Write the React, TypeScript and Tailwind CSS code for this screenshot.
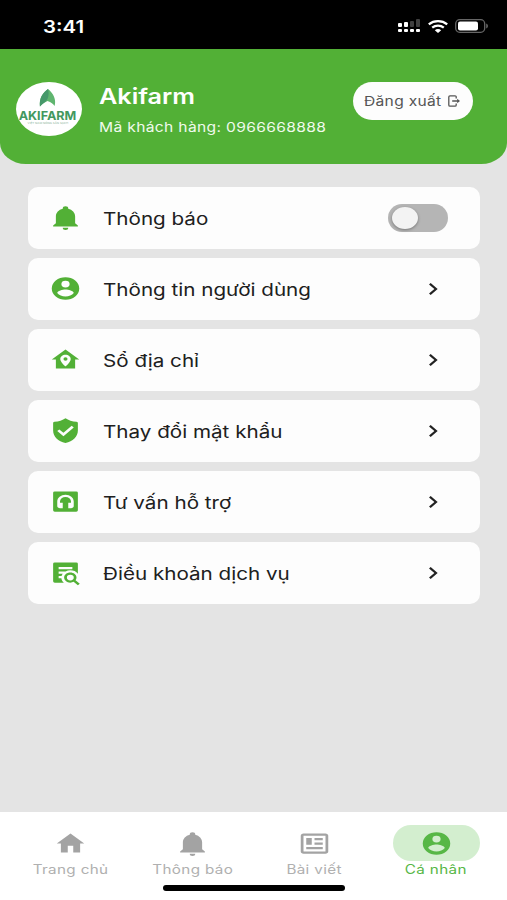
import { useState } from "react";
import type { ReactNode } from "react";
import clsx from "clsx";

const icons = {
  bell: "M21 19v1H3v-1l2-2v-6c0-3.1 2.03-5.83 5-6.71V4a2 2 0 0 1 4 0v.29c2.97.88 5 3.61 5 6.71v6l2 2m-7 2a2 2 0 0 1-4 0",
  account:
    "M12 19.2c-2.5 0-4.71-1.28-6-3.2.03-2 4-3.1 6-3.1s5.97 1.1 6 3.1c-1.29 1.92-3.5 3.2-6 3.2M12 5a3 3 0 1 1 0 6 3 3 0 0 1 0-6m0-3a10 10 0 1 0 0 20 10 10 0 0 0 0-20z",
  address:
    "M12 3 2 12h3v8h14v-8h3L12 3m0 4.7c2.1 0 3.8 1.7 3.8 3.8 0 3-3.8 6.5-3.8 6.5s-3.8-3.5-3.8-6.5c0-2.1 1.7-3.8 3.8-3.8m0 2.3a1.5 1.5 0 1 0 0 3 1.5 1.5 0 0 0 0-3z",
  shield:
    "M12 1c2 1.7 5 3 8 3.3.7.1 1 .5 1 1.2V12c0 5.500-3.600 9.600-9 11-5.400-1.400-9-5.500-9-11V5.500c0-.7.3-1.100 1-1.200C7 4 10 2.700 12 1zm-1.500 16 7.500-7.700L16.500 7.800l-6 6.200-3-3L6 12.500l4.500 4.500z",
  support:
    "M12 6c3.300 0 6 2.690 6 6v4c0 1.110-.89 2-2 2h-2v-5h2v-1a4 4 0 0 0-8 0v1h2v5H8c-1.110 0-2-.89-2-2v-4c0-3.310 2.690-6 6-6M4.200 3h15.600A1.200 1.200 0 0 1 21 4.200v15.600a1.200 1.200 0 0 1-1.200 1.200H4.200A1.200 1.200 0 0 1 3 19.800V4.200A1.200 1.200 0 0 1 4.200 3z",
  terms:
    "M15.500 12c2.500 0 4.500 2 4.500 4.500 0 .88-.25 1.710-.69 2.400l3.080 3.100L21 23.390l-3.120-3.070c-.69.43-1.510.68-2.380.68-2.500 0-4.500-2-4.500-4.500s2-4.500 4.500-4.500m0 2a2.500 2.500 0 1 0 0 5 2.500 2.500 0 0 0 0-5M7 15v2h2c.14 1.550.8 2.940 1.810 4H4.200A1.200 1.200 0 0 1 3 19.800V4.200A1.200 1.200 0 0 1 4.200 3h15.600A1.200 1.200 0 0 1 21 4.200v8.830A6.500 6.500 0 0 0 15.500 10c-1.270 0-2.450.36-3.460 1H7v2h3.030c-.42.600-.730 1.280-.890 2H7M17 9V7H7v2h10z",
  home: "M10 20v-6h4v6h5v-8h3L12 3 2 12h3v8h5z",
  news: "M20 5v14H4V5h16m0-2H4c-1.110 0-2 .89-2 2v14c0 1.110.89 2 2 2h16c1.110 0 2-.89 2-2V5c0-1.110-.89-2-2-2m-2 12H6v2h12v-2m-8-8H6v6h4V7m2 2h6V7h-6v2m6 2h-6v2h6v-2z",
  chevron: "M8.590 16.580 13.170 12 8.590 7.410 10 6l6 6-6 6-1.410-1.420z",
};

type IconName = keyof typeof icons;

function Icon({ name, className }: { name: IconName; className?: string }) {
  return (
    <svg viewBox="0 0 24 24" preserveAspectRatio="none" fill="currentColor" fillRule="evenodd" className={clsx("shrink-0", className)}>
      <path d={icons[name]} />
    </svg>
  );
}

// wide lettering used all over the app
function Wide({ children, className }: { children: ReactNode; className?: string }) {
  return <span className={clsx("block scale-x-[1.2] whitespace-nowrap", className)}>{children}</span>;
}

const menu: { icon: IconName; label: string }[] = [
  { icon: "bell", label: "Thông báo" },
  { icon: "account", label: "Thông tin người dùng" },
  { icon: "address", label: "Sổ địa chỉ" },
  { icon: "shield", label: "Thay đổi mật khẩu" },
  { icon: "support", label: "Tư vấn hỗ trợ" },
  { icon: "terms", label: "Điều khoản dịch vụ" },
];

const tabs: { icon: IconName; label: string }[] = [
  { icon: "home", label: "Trang chủ" },
  { icon: "bell", label: "Thông báo" },
  { icon: "news", label: "Bài viết" },
  { icon: "account", label: "Cá nhân" },
];

function StatusBar() {
  return (
    <div className="flex h-[49px] shrink-0 items-center justify-between bg-black pt-[3px] pr-[18px] pl-[43px] text-white">
      <Wide className="origin-left pt-[3px] text-[17px] font-semibold">3:41</Wide>
      <div className="flex items-center">
        <svg viewBox="0 0 22 14" className="mr-[8px] h-[14px] w-[22px]" fill="#fff">
          <rect y="4" width="4" height="4" rx="1" />
          <rect x="6" y="3" width="4" height="5" rx="1" />
          <rect x="12" y="2" width="4" height="6" rx="1" opacity=".25" />
          <rect x="18" y="0" width="4" height="8" rx="1" opacity=".25" />
          <rect y="10" width="4" height="3" rx="1" />
          <rect x="6" y="10" width="4" height="3" rx="1" />
          <rect x="12" y="10" width="4" height="3" rx="1" />
          <rect x="18" y="10" width="4" height="3" rx="1" />
        </svg>
        <svg viewBox="0 0 20 13" className="mr-[7px] h-[13px] w-[20px]" fill="none" stroke="#fff" strokeWidth="2.300">
          <path d="M.8 4.300c5.200-4.200 13.200-4.200 18.400 0" />
          <path d="M4.200 7.700c3.400-2.900 8.200-2.900 11.600 0" />
          <path d="M6.800 10.200c1.900-1.600 4.500-1.600 6.400 0L10 13z" fill="#fff" stroke="none" />
        </svg>
        <svg viewBox="0 0 34 14" className="h-[14px] w-[34px]">
          <rect x=".7" y=".7" width="29" height="12.600" rx="4" fill="none" stroke="#666" strokeWidth="1.300" />
          <rect x="3" y="2.500" width="20" height="9" rx="2" fill="#fff" />
          <path d="M31.300 4.500c2 .8 2 4.200 0 5z" fill="#777" />
        </svg>
      </div>
    </div>
  );
}

function Logo() {
  return (
    <div className="flex h-[54px] w-[66px] shrink-0 flex-col items-center rounded-[50%] bg-white pt-[7px] text-[#43985f]">
      <svg viewBox="0 0 18 18" preserveAspectRatio="none" className="mr-[3px] h-[18px] w-[17px]">
        <path d="M9.500 0C4 4 0 9 1 17.500c2-2 3.500-3.500 8-5.500 4 1 6 3 7.500 5C18.500 10 15 4 9.500 0z" fill="#5fb56f" />
        <path d="M9.500 0C4 4 0 9 1 17.500c2-2 4-3.500 6-5 3-2.500 4-8 2.500-12.500z" fill="#46986a" />
      </svg>
      <span className="mt-[2px] mr-[3px] block scale-x-[1.05] text-[12px] leading-[14px] font-bold">AKIFARM</span>
      <Wide className="-mt-px mr-[2px] text-[2.500px] leading-[4px] text-[#8bb39a]">VIỆT NAM NÔNG SẢN SẠCH</Wide>
    </div>
  );
}

function Header() {
  return (
    <header className="flex h-[115px] shrink-0 rounded-b-[26px_21px] bg-[#52b036] pr-[34px] pl-[16px] text-white">
      <div className="pt-[33px]">
        <Logo />
      </div>
      <div className="ml-[17px] flex-1 pt-[35px]">
        <Wide className="w-0 origin-left text-[21px] leading-[26px] font-semibold">Akifarm</Wide>
        <Wide className="mt-[7px] w-0 origin-left text-[13px] leading-[20px] tracking-[0.28px] text-[#f0faed]">Mã khách hàng: 0966668888</Wide>
      </div>
      <button className="mt-[33px] flex h-[38px] w-[120px] items-center rounded-full bg-[#fdfdfd] pl-[11px] text-[#555]">
        <Wide className="w-[84px] origin-left pt-[2px] text-left text-[13px] tracking-[0.25px]">Đăng xuất</Wide>
        <svg viewBox="0 0 12 12" className="h-[12px] w-[12px]" fill="none" stroke="currentColor" strokeWidth="1.300">
          <path d="M8.200 3.500V2c0-.8-.4-1.200-1.200-1.200H2C1.200.8.8 1.200.8 2v8c0 .8.4 1.200 1.200 1.200h5c.8 0 1.200-.4 1.200-1.200V8.500M4.200 6h6" />
          <path d="M9.200 3.700 12 6 9.200 8.300z" fill="currentColor" stroke="none" />
        </svg>
      </button>
    </header>
  );
}

export default function App() {
  const [enabled, setEnabled] = useState(false);
  const [tab, setTab] = useState(3);

  return (
    <div className="flex h-[900px] w-[507px] flex-col overflow-hidden bg-[#e4e4e4] font-['Inter',sans-serif]">
      <StatusBar />
      <Header />

      <main className="flex flex-1 flex-col gap-[9px] pt-[23px] pr-[27px] pl-[27.5px]">
        {menu.map((item, i) => (
          <div key={item.label} className="flex h-[62px] items-center rounded-[10px] bg-[#fdfdfd] pl-[21.5px]">
            <Icon name={item.icon} className="mb-px h-[27px] w-[33px] text-[#52b036]" />
            <Wide className="ml-[21px] flex-1 origin-left pt-px text-[17.200px] text-[#202020]">{item.label}</Wide>
            {i === 0 ? (
              <button
                onClick={() => setEnabled(!enabled)}
                className={clsx("mr-[32px] flex h-[28px] w-[60px] items-center rounded-full px-[4px]", enabled ? "justify-end bg-[#52b036]" : "bg-[#b5b5b5]")}
              >
                <span className="h-[22px] w-[26px] rounded-[50%] bg-[#f3f3f3] shadow-[0_1px_3px_rgba(0,0,0,0.35)]" />
              </button>
            ) : (
              <Icon name="chevron" className="mr-[33px] h-[24px] w-[28px] text-[#222]" />
            )}
          </div>
        ))}
      </main>

      <nav className="flex h-[88px] shrink-0 flex-col bg-white px-[10px] pt-[13px]">
        <div className="flex">
          {tabs.map((item, i) => (
            <button key={item.label} onClick={() => setTab(i)} className={clsx("flex flex-1 flex-col items-center", i === tab ? "text-[#57b746]" : "text-[#a3a3a3]")}>
              <span className={clsx("flex h-[36px] w-[87px] items-center justify-center rounded-full", i === tab && "bg-[#d3eecf]")}>
                <Icon name={item.icon} className="h-[27px] w-[33px]" />
              </span>
              <Wide className={clsx("pt-px text-[12.700px] leading-[16px] tracking-[0.3px]", i === tab ? "" : "text-[#b0b0b0]")}>{item.label}</Wide>
            </button>
          ))}
        </div>
        <div className="mt-[7px] ml-[153px] h-[6px] w-[182px] rounded-full bg-black" />
      </nav>
    </div>
  );
}
